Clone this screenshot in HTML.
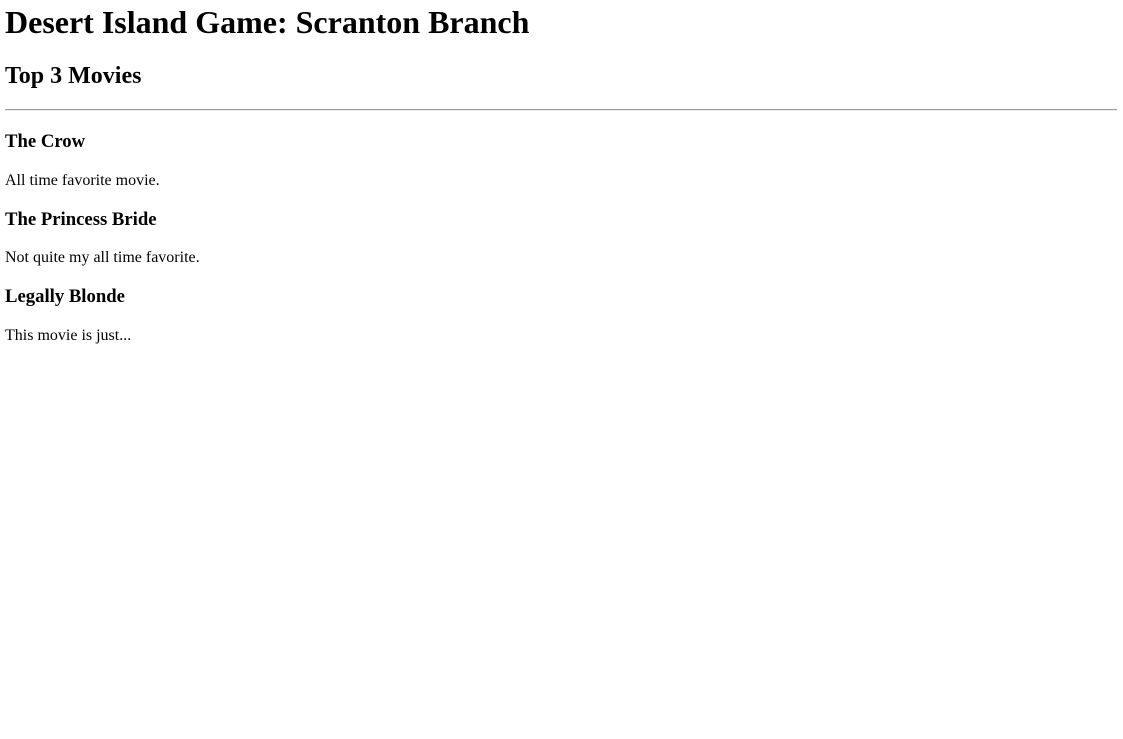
<!DOCTYPE html>
<html><head><style>
body{margin:0;font-family:"Liberation Serif",serif;color:#000;background:#fff}
.a{position:absolute;left:5px;margin:0;white-space:nowrap;line-height:normal}
h1{font-size:32px}
h2{font-size:24px}
h3{font-size:18.7px}
p{font-size:16px}
hr{position:absolute;left:5px;top:109px;width:1112px;margin:0;border:0;border-top:1px solid #9a9a9a;border-bottom:1px solid #eee;height:0}
</style></head><body>
<h1 class="a" style="top:4px">Desert Island Game: Scranton Branch</h1>
<h2 class="a" style="top:63px">Top 3 Movies</h2>
<hr>
<h3 class="a" style="top:131px">The Crow</h3>
<p class="a" style="top:172px">All time favorite movie.</p>
<h3 class="a" style="top:209px">The Princess Bride</h3>
<p class="a" style="top:249px">Not quite my all time favorite.</p>
<h3 class="a" style="top:286px">Legally Blonde</h3>
<p class="a" style="top:327px">This movie is just...</p>
</body></html>
